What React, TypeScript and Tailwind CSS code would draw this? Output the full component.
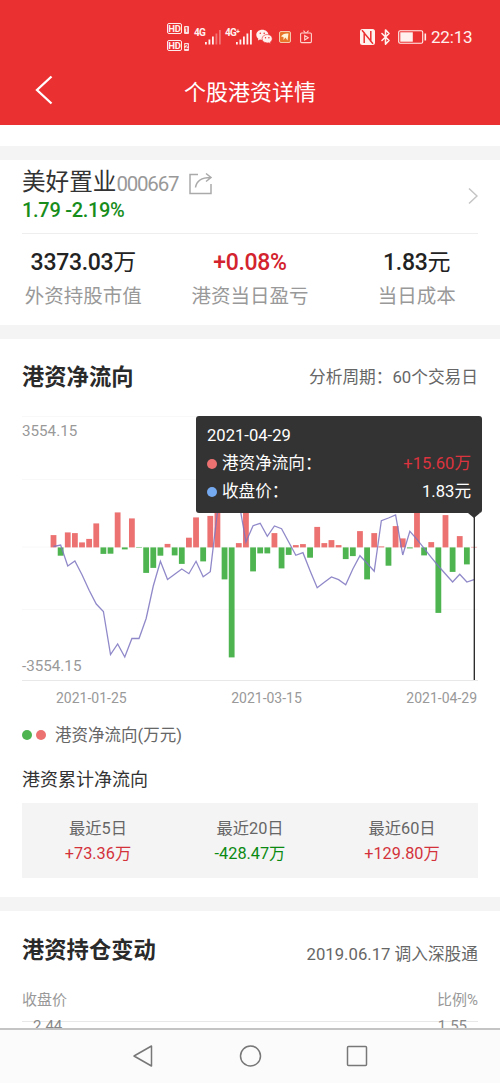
import { Bluetooth } from "lucide-react";

// 每日净流向柱高（正红负绿）
const flows = [
  12.3, -8.3, 15, 14.3, 5, 8.5, 24, -6.5, -6.3, 35, -2, 29, -0.5, -25.5, -20.5,
  -8.3, 3.5, -8, -16.5, 9.7, 30, -14, 31.5, 50, -32, -110, 4.3, 48, -24, -6,
  -6, 14.3, -21, -7.5, 2.3, 3.3, -10.3, 20.5, 4.3, 7.3, 2.3, -11.7, -8.7, 16.3, -32,
  14.3, 1, -18.3, 21.3, 9, -1, 40, -8, 5.3, -65.5, 32.3, -24.5, 11.3, -17, 0.5,
];

// 收盘价折线
const prices = [
  130.5, 129, 150, 145, 158.7, 174.3, 188, 195.5, 238.5, 228, 241, 222.5, 222.5, 202.5, 170,
  145.3, 163.5, 158.3, 153, 157.7, 145.3, 160.7, 155.7, 96, 64, 64, 85, 126, 109.7, 107.3,
  120.3, 110, 112.7, 126, 139.3, 136.7, 154.7, 171.7, 166.3, 161, 163.7, 168.7, 153, 139.7, 147.3,
  155.3, 104.7, 102, 99, 139, 115.3, 123.3, 132.3, 141.3, 150, 158, 166, 158.3, 166, 163.7,
];

const BASE = 131.4;
const xAt = (i: number) => 31.5 + i * 7.127;

const holdings = [
  { value: "3373.03", unit: "万", label: "外资持股市值", color: "text-[#222]" },
  { value: "+0.08%", unit: "", label: "港资当日盈亏", color: "text-[#d3232e]" },
  { value: "1.83", unit: "元", label: "当日成本", color: "text-[#222]" },
];

const totals = [
  { label: "最近5日", value: "+73.36万", color: "text-[#d3323b]" },
  { label: "最近20日", value: "-428.47万", color: "text-[#0b8a12]" },
  { label: "最近60日", value: "+129.80万", color: "text-[#d3323b]" },
];

const HdBadge = ({ n }: { n: string }) => (
  <div className="flex items-end gap-[2px]">
    <span className="flex h-[11px] w-[15px] items-center justify-center rounded-[2px] border border-white/90 text-[9.5px] leading-none font-bold tracking-[-0.2px]">
      HD
    </span>
    <span className="flex h-[8px] w-[5px] items-center justify-center rounded-[1px] bg-white/85 text-[7px] leading-none font-bold text-[#eb3032]">
      {n}
    </span>
  </div>
);

const Signal = ({ label, faded }: { label: string; faded: boolean }) => (
  <div className="relative h-[17px] w-[27px]">
    <span className="absolute top-0 left-0 text-[10px] leading-[10px] font-bold tracking-[-0.8px]">
      {label}
    </span>
    <svg className="absolute right-0 bottom-0" width="18" height="16" fill="#fff1ee">
      <rect x="2" y="13" width="1.8" height="2.5" />
      <rect x="5.500" y="10.500" width="1.8" height="5" />
      <rect x="9" y="7.500" width="1.8" height="8" />
      <rect x="12.500" y="4.500" width="1.8" height="11" opacity={faded ? 0.35 : 1} />
      <rect x="16" y="1" width="1.8" height="14.500" opacity={faded ? 0.35 : 1} />
    </svg>
  </div>
);

const StatusBar = () => (
  <div className="flex h-[60px] items-start pl-[167px] text-[#fff1ee]">
    <div className="mt-[23px] flex flex-col gap-[6px]">
      <HdBadge n="1" />
      <HdBadge n="2" />
    </div>
    <div className="mt-[28px] ml-[5px] flex items-start gap-[4px]">
      <Signal label="4G" faded />
      <Signal label="4G⁺" faded={false} />
    </div>
    {/* 微信 */}
    <svg className="mt-[29px] ml-[4px]" width="17" height="16" viewBox="0 0 17 16">
      <path d="M6.300.8C2.900.8.3 3 .3 5.800c0 1.600.8 3 2.100 3.900l-.5 1.900 2.100-1.100c.8.2 1.500.3 2.400.3 3.300 0 6-2.200 6-5S9.600.8 6.300.8z" fill="#fff1ee" />
      <path d="M11.200 5.500c-2.900 0-5.100 1.800-5.100 4.200s2.200 4.200 5.100 4.200c.6 0 1.200-.1 1.700-.2l1.900 1-.5-1.700c1.200-.8 1.900-1.900 1.900-3.300 0-2.400-2.200-4.200-5-4.200z" fill="#fff1ee" stroke="#eb3032" strokeWidth=".6" />
      <g fill="#eb3032">
        <circle cx="4.300" cy="4.300" r=".8" />
        <circle cx="8.200" cy="4.300" r=".8" />
        <circle cx="9.500" cy="8.700" r=".7" />
        <circle cx="12.900" cy="8.700" r=".7" />
      </g>
    </svg>
    <svg className="mt-[31px] ml-[6px]" width="12" height="12" viewBox="0 0 12 12">
      <rect x=".5" y=".5" width="11" height="11" rx="1.500" fill="#e8752a" stroke="#f6c9ad" />
      <path d="M2 5.500C3.500 3 6 2 9.500 2.500L8.500 9.500 6.500 6.500 4.500 9 4.500 6z" fill="#fff3d8" />
    </svg>
    <svg className="mt-[30px] ml-[9px]" width="12" height="14" viewBox="0 0 12 14" fill="none" stroke="#ffd5cf" strokeWidth="1.100">
      <rect x=".6" y="3" width="10.800" height="9.600" rx="1" />
      <path d="M3.500.7 5.500 3M8.500.7 6.500 3M4.700 5.600v4.400L8.300 7.800z" />
    </svg>
    {/* NFC */}
    <svg className="mt-[29px] ml-[48px]" width="15" height="16" viewBox="0 0 15 16">
      <rect width="15" height="16" rx="2.500" fill="#fff1ee" />
      <path d="M4.200 14V4L10.800 12V2M2 1.200 4.800 4.500M13 14.800 10.200 11.500" fill="none" stroke="#eb3032" strokeWidth="1.500" />
    </svg>
    <Bluetooth className="mt-[28px] ml-[2px] h-[18px] w-[17px]" strokeWidth={2.2} />
    <svg className="mt-[30px] ml-[4px]" width="29" height="14" viewBox="0 0 29 14">
      <rect x=".7" y=".7" width="24" height="12.600" rx="1.500" fill="none" stroke="#fff1ee" strokeWidth="1.100" />
      <rect x="2.300" y="2.300" width="12.500" height="9.400" fill="#fff1ee" />
      <path d="M27.300 3.500v7" stroke="#fff1ee" strokeWidth="1.600" />
    </svg>
    <span className="mt-[26px] ml-[4px] text-[17px] leading-[22px] tracking-[-0.200px]">22:13</span>
  </div>
);

const FlowChart = () => (
  <div className="relative mt-[22px]">
    <svg className="block" width="456" height="266" viewBox="0 0 456 266">
      <path d="M0 .5H456M0 63.500H456M0 131H456M0 193.500H456" stroke="#f8f8f8" />
      <path d="M0 264.500H456" stroke="#e8e8e8" strokeWidth="1.200" />
      {flows.map((v, i) => (
        <rect
          key={i}
          x={xAt(i) - 2.9}
          y={v > 0 ? BASE - v : BASE}
          width="5.800"
          height={Math.abs(v)}
          fill={v > 0 ? "#ec7272" : "#4eb450"}
        />
      ))}
      <polyline
        points={prices.map((y, i) => `${xAt(i)},${y}`).join(" ")}
        fill="none"
        stroke="#7c74c0"
        strokeOpacity=".85"
        strokeWidth="1.300"
      />
      <path d="M452.300 96V264" stroke="#222" strokeWidth="1.300" />
    </svg>
    <span className="absolute top-[5px] left-0 text-[15.200px] leading-[20px] text-[#999]">3554.15</span>
    <span className="absolute top-[240px] left-0 text-[15.200px] leading-[20px] text-[#999]">-3554.15</span>

    {/* 悬浮提示 */}
    <div className="absolute top-0 left-[174px] h-[97px] w-[286px] rounded-[3px] bg-[#333] px-[11px] pt-[6px] text-[16.600px] leading-[28px] text-white">
      <div>2021-04-29</div>
      <div className="flex items-center">
        <span className="mr-[5px] h-[10px] w-[10px] rounded-full bg-[#ec7272]" />
        <span>港资净流向：</span>
        <span className="ml-auto text-[#dc343f]">+15.60万</span>
      </div>
      <div className="flex items-center">
        <span className="mr-[5px] h-[10px] w-[10px] rounded-full bg-[#76aaf0]" />
        <span>收盘价：</span>
        <span className="ml-auto">1.83元</span>
      </div>
      <svg className="absolute top-[97px] right-[2px]" width="12" height="5">
        <path d="M0 0H12L6 5z" fill="#333" />
      </svg>
    </div>
  </div>
);

const App = () => {
  return (
    <div className="flex h-[1083px] w-[500px] flex-col overflow-hidden bg-white font-[Roboto,'Noto_Sans_CJK_SC',sans-serif] whitespace-nowrap">
      <header className="h-[125px] shrink-0 bg-[#eb3032] text-white">
        <StatusBar />
        <div className="flex h-[65px] items-center">
          <svg className="mb-[5px] ml-[35px]" width="18" height="30" viewBox="0 0 18 30" fill="none" stroke="#fff" strokeWidth="2.300">
            <path d="M16.500 1.500 2 15 16.500 28.500" />
          </svg>
          <h1 className="mt-[1px] ml-[131px] text-[22px] leading-[30px]">个股港资详情</h1>
        </div>
      </header>

      <div className="mt-[21px] h-[14px] shrink-0 bg-[#f4f4f4]" />

      {/* 股票信息 */}
      <section className="h-[165px] shrink-0 px-[22px]">
        <div className="flex h-[74px] items-center justify-between border-b-[1.500px] border-[#eee]">
          <div className="pb-[5px]">
            <div className="flex h-[31px] items-center">
              <span className="mt-[1px] text-[23.600px] leading-[31px] text-[#333]">美好置业</span>
              <span className="mt-[3px] text-[20.500px] leading-[24px] tracking-[-1.200px] text-[#999]">000667</span>
              <svg className="mt-[3px] ml-[11px]" width="24" height="23" viewBox="0 0 24 23" fill="none" stroke="#aaa" strokeWidth="1.500">
                <path d="M9 2.500H1V21.500H22V12M6.500 15.500C7.500 9 12 5.500 21.500 5.500M17 1.500 22 5.500 17 9.500" />
              </svg>
            </div>
            <div className="text-[20px] leading-[24px] font-medium tracking-[-0.300px] text-[#178d1c]">
              1.79 -2.19%
            </div>
          </div>
          <svg className="mb-[2px]" width="10" height="18" viewBox="0 0 10 18" fill="none" stroke="#c4c4c4" strokeWidth="1.500">
            <path d="M1 1.500 9 9 1 16.500" />
          </svg>
        </div>
        <div className="-mx-[22px] grid grid-cols-3 pt-[13px] text-center">
          {holdings.map((h) => (
            <div key={h.label}>
              <div className={`text-[23px] leading-[32px] tracking-[-0.300px] ${h.color}`}>
                <span className="font-medium">{h.value}</span>
                {h.unit}
              </div>
              <div className="mt-[1px] text-[19.500px] leading-[34px] text-[#999]">{h.label}</div>
            </div>
          ))}
        </div>
      </section>

      <div className="h-[14px] shrink-0 bg-[#f4f4f4]" />

      {/* 净流向 */}
      <section className="h-[558px] shrink-0 px-[22px] pt-[25px]">
        <div className="flex h-[30px] items-center justify-between">
          <h2 className="mb-[2px] text-[22.300px] font-bold text-[#2a2a2a]">港资净流向</h2>
          <span className="mb-[2px] text-[16.700px] text-[#666]">分析周期：60个交易日</span>
        </div>
        <FlowChart />
        <div className="mt-[6px] flex justify-between pr-[1px] pl-[34px] text-[14px] leading-[20px] text-[#999]">
          <span>2021-01-25</span>
          <span>2021-03-15</span>
          <span>2021-04-29</span>
        </div>
        <div className="mt-[15px] flex items-center text-[16.500px] leading-[24px] text-[#666]">
          <span className="h-[10px] w-[10px] rounded-full bg-[#4eb450]" />
          <span className="mr-[9px] ml-[4px] h-[10px] w-[10px] rounded-full bg-[#ec7272]" />
          <span className="relative top-px">港资净流向(万元)</span>
        </div>
        <h3 className="mt-[19px] text-[18px] leading-[28px] text-[#333]">港资累计净流向</h3>
        <div className="mt-[9px] grid h-[75px] grid-cols-3 bg-[#f4f4f4] pt-[13px] text-center text-[16.300px] leading-[25px]">
          {totals.map((t) => (
            <div key={t.label}>
              <div className="text-[#666]">{t.label}</div>
              <div className={t.color}>{t.value}</div>
            </div>
          ))}
        </div>
      </section>

      <div className="h-[14px] shrink-0 bg-[#f4f4f4]" />

      {/* 持仓变动 */}
      <section className="h-[117px] shrink-0 overflow-hidden px-[22px] pt-[24px]">
        <div className="flex h-[32px] items-center justify-between">
          <h2 className="text-[22.300px] font-bold text-[#2a2a2a]">港资持仓变动</h2>
          <span className="mt-[8px] text-[16.700px] text-[#666]">2019.06.17 调入深股通</span>
        </div>
        <div className="mt-[21px] flex justify-between text-[15px] leading-[24px] text-[#999]">
          <span>收盘价</span>
          <span>比例%</span>
        </div>
        <div className="mt-[9px] flex justify-between border-t border-[#e8e8e8] pr-[11px] pl-[11px] text-[15px] leading-[9px] text-[#888]">
          <span>2.44</span>
          <span>1.55</span>
        </div>
      </section>

      {/* 系统导航栏 */}
      <nav className="flex h-[55px] shrink-0 items-center justify-center gap-[84px] border-t-2 border-[#c4c4c4] bg-[#fbfbfb] pr-px pb-[2px]">
        <svg width="22" height="24" viewBox="0 0 22 24" fill="none" stroke="#777" strokeWidth="1.500" strokeLinejoin="round">
          <path d="M19.500 2V22L2 12z" />
        </svg>
        <svg width="24" height="24" viewBox="0 0 24 24" fill="none" stroke="#777" strokeWidth="1.500">
          <circle cx="12.500" cy="12" r="10" />
        </svg>
        <svg width="22" height="24" viewBox="0 0 22 24" fill="none" stroke="#777" strokeWidth="1.500">
          <rect x="1.500" y="2.500" width="19" height="19" rx="1" />
        </svg>
      </nav>
    </div>
  );
};

export default App;
